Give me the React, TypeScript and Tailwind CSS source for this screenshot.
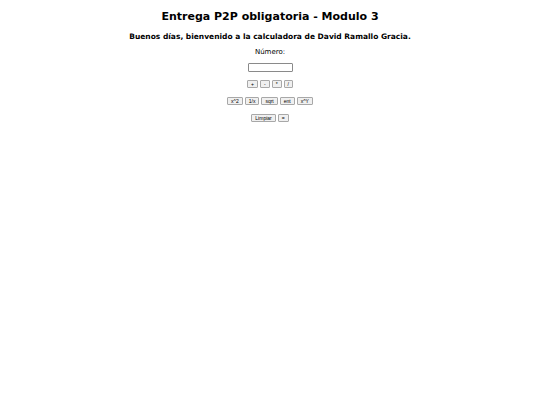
import { useState } from "react";

const ops = ["+", "-", "*", "/"];
const funcs = ["x^2", "1/x", "sqrt", "ent", "x^Y"];

function Btn({ label, onClick }: { label: string; onClick?: () => void }) {
  return (
    <button
      onClick={onClick}
      className="h-[8px] px-[3px] min-w-[9px] flex items-center justify-center border border-[#a8a8a8] rounded-[1px] bg-[#f0f0f0] text-[5px] leading-none text-black font-['Liberation_Sans',sans-serif]"
    >
      {label}
    </button>
  );
}

export default function App() {
  const [num, setNum] = useState("");

  return (
    <div className="min-h-[405px] w-full bg-white text-black flex flex-col items-center font-['DejaVu_Sans',sans-serif]">
      <h1 className="mt-[10px] text-[11px] leading-[14px] font-bold">
        Entrega P2P obligatoria - Modulo 3
      </h1>
      <h3 className="mt-[8px] text-[7.5px] leading-[10px] font-bold">
        Buenos días, bienvenido a la calculadora de David Ramallo Gracia.
      </h3>
      <p className="mt-[5px] text-[7px] leading-[10px]">Número:</p>
      <input
        value={num}
        onChange={(e) => setNum(e.target.value)}
        className="mt-[6px] w-[45px] h-[9px] border border-[#8a8a8a] rounded-[1px] bg-white text-[6px] px-[2px] outline-none"
      />
      <div className="mt-[8px] flex gap-[2px]">
        {ops.map((o) => (
          <Btn key={o} label={o} />
        ))}
      </div>
      <div className="mt-[9px] flex gap-[2px]">
        {funcs.map((f) => (
          <Btn key={f} label={f} />
        ))}
      </div>
      <div className="mt-[9px] flex gap-[2px]">
        <Btn label="Limpiar" onClick={() => setNum("")} />
        <Btn label="=" />
      </div>
    </div>
  );
}
